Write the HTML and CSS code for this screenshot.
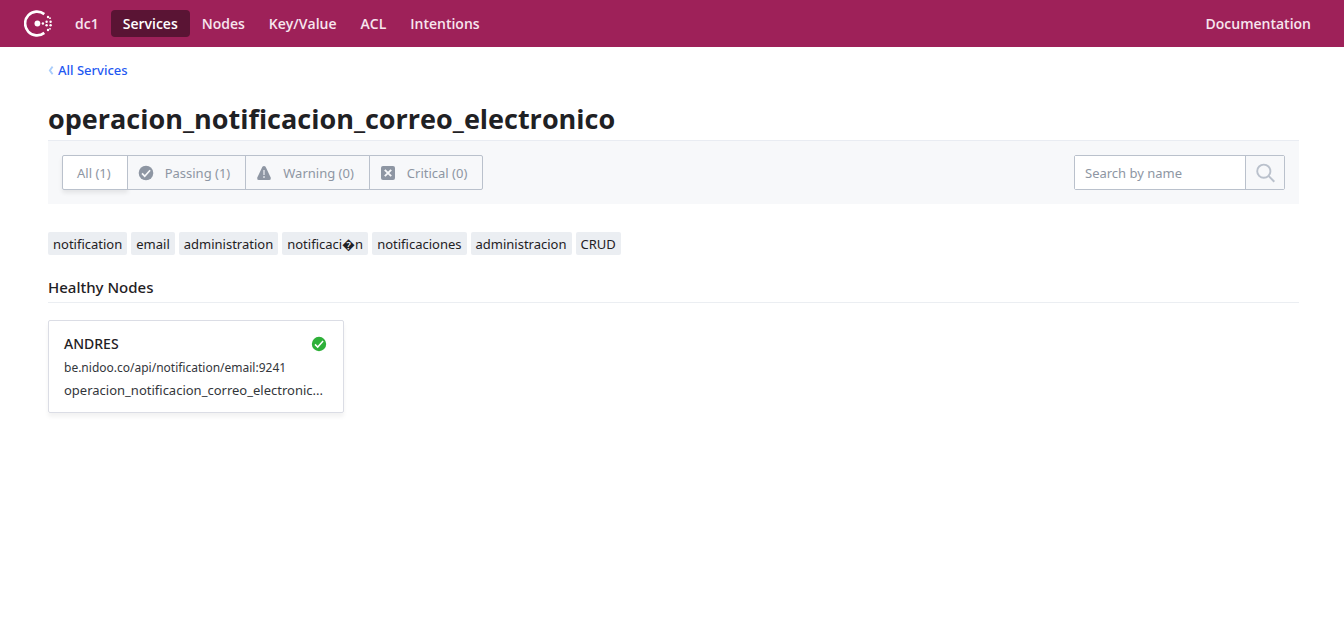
FILE: index.html
```html
<!DOCTYPE html>
<html lang="en">
<head>
<meta charset="utf-8">
<meta name="viewport" content="width=device-width, initial-scale=1">
<title>operacion_notificacion_correo_electronico - Consul</title>
<link rel="stylesheet" href="styles.css">
</head>
<body>
<header class="topbar">
  <a class="logo" href="#" aria-label="Consul">
    <svg width="28" height="27" viewBox="0 0 28 27" aria-hidden="true">
      <path d="M20.3 4.1A11.9 11.9 0 1 0 20.3 22.9" fill="none" stroke="#fff" stroke-width="2.6"/>
      <g fill="#fff">
        <circle cx="13.4" cy="13.5" r="2.9"/>
        <circle cx="18.9" cy="13.5" r="1.2"/>
        <circle cx="22.6" cy="11.7" r="1.2"/><circle cx="22.6" cy="15.3" r="1.2"/>
        <circle cx="26.6" cy="11.7" r="1.2"/><circle cx="26.6" cy="15.3" r="1.2"/>
        <circle cx="26" cy="8.2" r=".9"/><circle cx="26" cy="18.8" r=".9"/>
        <circle cx="24" cy="7" r="1.2"/><circle cx="24" cy="20" r="1.2"/>
      </g>
    </svg>
  </a>
  <nav class="nav">
    <a class="nav-link" href="#">dc1</a>
    <a class="nav-link nav-link-active" href="#" aria-current="page">Services</a>
    <a class="nav-link" href="#">Nodes</a>
    <a class="nav-link" href="#">Key/Value</a>
    <a class="nav-link" href="#">ACL</a>
    <a class="nav-link" href="#">Intentions</a>
  </nav>
  <a class="nav-link" href="#">Documentation</a>
</header>
<main class="page">
  <a class="breadcrumb" href="#">
    <svg width="6" height="10" viewBox="0 0 6 10" aria-hidden="true"><path d="M4.6 1.6 1.8 5.4l2.8 3.8" fill="none" stroke="#a9cdfb" stroke-width="1.8"/></svg>
    All Services
  </a>
  <h1 class="title">operacion_notificacion_correo_electronico</h1>
  <form class="toolbar">
    <div class="filters">
      <button class="filter filter-active" type="button">All (1)</button>
      <button class="filter" type="button">
        <svg width="16" height="16" viewBox="0 0 16 16" aria-hidden="true"><circle cx="8" cy="8" r="7.3" fill="#8e96a3"/><path d="m4 8.4 2.7 2.8 5.4-6" fill="none" stroke="#f7f8fa" stroke-width="1.7"/></svg>
        Passing (1)
      </button>
      <button class="filter" type="button">
        <svg width="16" height="16" viewBox="0 0 16 16" aria-hidden="true"><path d="M6.4 1.8Q8 0 9.6 1.8L14.8 12.8Q15.2 15 13.4 15H2.6Q.8 15 1.2 12.8Z" fill="#8e96a3"/><path d="M8 5v5M8 11v2" stroke="#d6dae0" stroke-width="1.6"/></svg>
        Warning (0)
      </button>
      <button class="filter" type="button">
        <svg width="16" height="16" viewBox="0 0 16 16" aria-hidden="true"><rect x="1" y="1" width="14" height="14" rx="2" fill="#8e96a3"/><path d="m4.8 4.8 6.4 6.4m0-6.4-6.4 6.4" stroke="#f7f8fa" stroke-width="1.9"/></svg>
        Critical (0)
      </button>
    </div>
    <div class="search">
      <input class="search-input" type="search" placeholder="Search by name" aria-label="Search by name">
      <button class="search-button" type="button" aria-label="Search">
        <svg width="20" height="20" viewBox="0 0 20 20" aria-hidden="true"><circle cx="8.8" cy="8.2" r="6.6" fill="none" stroke="#bac1cc" stroke-width="1.9"/><path d="m13.5 12.9 5.8 5.8" stroke="#bac1cc" stroke-width="2"/></svg>
      </button>
    </div>
  </form>
  <ul class="tags">
    <li class="tag">notification</li>
    <li class="tag">email</li>
    <li class="tag">administration</li>
    <li class="tag">notificaci&#xFFFD;n</li>
    <li class="tag">notificaciones</li>
    <li class="tag">administracion</li>
    <li class="tag">CRUD</li>
  </ul>
  <h2 class="section-title">Healthy Nodes</h2>
  <div class="cards">
    <a class="card" href="#">
      <span class="card-head">
        <span class="card-name">ANDRES</span>
        <svg width="16" height="16" viewBox="0 0 16 16" role="img" aria-label="Passing"><circle cx="8" cy="8" r="7.2" fill="#2eb039"/><path d="m4 8.4 2.7 2.7 5.4-6" fill="none" stroke="#fff" stroke-width="1.5"/></svg>
      </span>
      <span class="card-line card-address">be.nidoo.co/api/notification/email:9241</span>
      <span class="card-line">operacion_notificacion_correo_electronic...</span>
    </a>
  </div>
</main>
</body>
</html>
```
FILE: styles.css
```css
* {
  box-sizing: border-box;
}

body {
  margin: 0;
  background: #fff;
  color: #1f2124;
  font-family: "Noto Sans", "Open Sans", sans-serif;
  font-size: 13px;
  line-height: 20px;
}

a {
  color: inherit;
  text-decoration: none;
}

button,
input {
  font: inherit;
}

svg {
  display: block;
  flex: none;
}

.topbar {
  display: flex;
  align-items: center;
  height: 47px;
  padding: 0 21px 0 24px;
  background: #9e2159;
  color: #f7e5ee;
}

.nav {
  display: flex;
  flex: 1;
  margin-left: 11px;
}

.nav-link {
  padding: 4px 12px;
  border-radius: 4px;
  font-family: "Open Sans", "Noto Sans", sans-serif;
  font-size: 14px;
  font-weight: 600;
  line-height: 19px;
}

.nav-link-active {
  background: #5a1434;
  color: #fff;
}

.page {
  padding: 13px 45px 40px 48px;
}

.breadcrumb {
  display: inline-flex;
  align-items: center;
  gap: 4px;
  color: #1f59f2;
  font-weight: 500;
}

.title {
  margin: 19px 0 0;
  padding-bottom: 1px;
  font-family: "Open Sans", "Noto Sans", sans-serif;
  font-size: 27px;
  font-weight: 700;
  line-height: 40px;
}

.toolbar {
  display: flex;
  justify-content: space-between;
  padding: 14px;
  border-top: 1px solid #e9ecf2;
  background: #f7f8fa;
}

.filters {
  display: flex;
  border-radius: 2px;
}

.filter {
  display: flex;
  align-items: center;
  gap: 11px;
  height: 35px;
  margin-left: -1px;
  padding: 0 15px 0 10px;
  border: 1px solid #bac1cc;
  background: #f7f8fa;
  color: #8e96a3;
}

.filter:first-child {
  margin-left: 0;
  padding: 0 16px 0 14px;
  border-radius: 2px 0 0 2px;
}

.filter:last-child {
  border-radius: 0 2px 2px 0;
}

.filter-active {
  background: #fff;
  box-shadow: 0 3px 4px rgba(0, 0, 0, 0.08);
}

.search {
  display: flex;
  border: 1px solid #bac1cc;
  border-radius: 2px;
}

.search-input {
  width: 170px;
  height: 33px;
  padding: 0 10px;
  border: 0;
  background: #fff;
}

.search-input::placeholder {
  color: #8e96a3;
}

.search-button {
  display: grid;
  place-items: center;
  width: 39px;
  padding: 0;
  border: 0;
  border-left: 1px solid #bac1cc;
  background: #f7f8fa;
}

.tags {
  display: flex;
  flex-wrap: wrap;
  gap: 4px;
  margin: 28px 0 0;
  padding: 0;
  list-style: none;
}

.tag {
  padding: 2px 5px 0;
  border-radius: 2px;
  background: #ebeef2;
  line-height: 21px;
}

.section-title {
  margin: 20px 0 17px;
  padding-bottom: 3px;
  border-bottom: 1px solid #ebeef2;
  font-size: 15px;
  font-weight: 500;
  line-height: 24px;
}

.cards {
  display: grid;
  grid-template-columns: repeat(auto-fill, 296px);
  gap: 16px;
}

.card {
  display: flex;
  flex-direction: column;
  padding: 11px 15px;
  border: 1px solid #dbdde5;
  border-radius: 2px;
  box-shadow: 0 4px 4px rgba(0, 0, 0, 0.05);
}

.card-head {
  display: flex;
  align-items: center;
  justify-content: space-between;
  padding: 0 1px 1px 0;
  line-height: 24px;
}

.card-name {
  font-size: 14px;
  font-weight: 500;
}

.card-line {
  overflow: hidden;
  color: #33363b;
  line-height: 22px;
  text-overflow: ellipsis;
  white-space: nowrap;
}

.card-address {
  font-size: 12px;
}
```
